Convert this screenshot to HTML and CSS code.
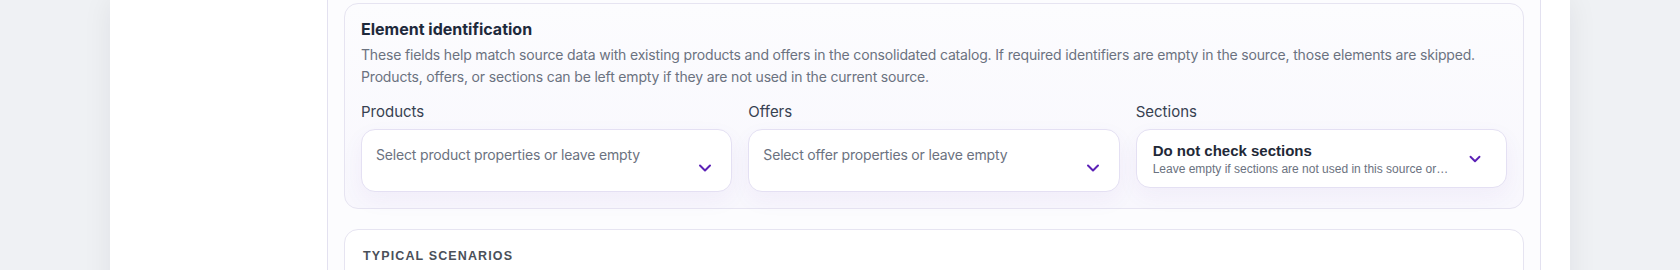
FILE: index.html
```html
<!DOCTYPE html>
<html lang="en">
<head>
<meta charset="utf-8">
<title>Element identification</title>
<link rel="stylesheet" href="styles.css">
</head>
<body>
<div class="page">
  <aside class="sidebar"></aside>
  <main class="column">
    <section class="card card--ident">
      <h2 class="card-title">Element identification</h2>
      <p class="card-desc">These fields help match source data with existing products and offers in the consolidated catalog. If required identifiers are empty in the source, those elements are skipped.<br>Products, offers, or sections can be left empty if they are not used in the current source.</p>
      <div class="fields">
        <div class="field">
          <div class="field-label">Products</div>
          <div class="select select--multi">
            <span class="select-placeholder">Select product properties or leave empty</span>
            <svg class="chevron" viewBox="0 0 24 24" width="20" height="20" aria-hidden="true"><path d="M6 9l6 6 6-6"/></svg>
          </div>
        </div>
        <div class="field">
          <div class="field-label">Offers</div>
          <div class="select select--multi">
            <span class="select-placeholder">Select offer properties or leave empty</span>
            <svg class="chevron" viewBox="0 0 24 24" width="20" height="20" aria-hidden="true"><path d="M6 9l6 6 6-6"/></svg>
          </div>
        </div>
        <div class="field">
          <div class="field-label">Sections</div>
          <div class="select select--single">
            <div class="select-value">
              <div class="select-title">Do not check sections</div>
              <div class="select-hint" title="Leave empty if sections are not used in this source or the source has no section structure">Leave empty if sections are not used in this source or…</div>
            </div>
            <svg class="chevron chevron--sm" viewBox="0 0 24 24" width="18" height="18" aria-hidden="true"><path d="M6 9l6 6 6-6"/></svg>
          </div>
        </div>
      </div>
    </section>
    <section class="card card--scenarios">
      <h3 class="eyebrow">Typical scenarios</h3>
    </section>
  </main>
</div>
</body>
</html>
```
FILE: styles.css
```css
html, body {
  margin: 0;
  height: 100%;
}

body {
  background: #eff1f4;
  font-family: Inter, "Noto Sans", sans-serif;
  overflow: hidden;
}

.page {
  width: 1460px;
  min-height: 270px;
  margin: 0 auto;
  background: #ffffff;
  box-shadow: 0 0 28px rgba(15, 23, 42, 0.07);
  display: grid;
  grid-template-columns: 217px 1214px;
}

.column {
  min-height: 270px;
  box-sizing: border-box;
  padding: 3px 16px 0;
  background: #fcfcfe;
  border-left: 1px solid #e3e1f0;
  border-right: 1px solid #e3e1f0;
}

.card {
  border: 1px solid #e6e4f1;
  border-radius: 14px;
  background: #ffffff;
}

.card--ident {
  padding: 14px 16px 16px;
  background: linear-gradient(180deg, #fcfcfe 0%, #f8f7fd 100%);
}

.card-title {
  margin: 0;
  font-size: 16px;
  line-height: 22px;
  font-weight: 700;
  color: #1e293b;
}

.card-desc {
  margin: 4px 0 0;
  font-size: 14px;
  line-height: 22px;
  letter-spacing: -0.012em;
  color: #6b7280;
}

.fields {
  margin-top: 14px;
  display: grid;
  grid-template-columns: repeat(3, minmax(0, 1fr));
  gap: 16px;
  align-items: start;
}

.field-label {
  font-size: 15px;
  line-height: 20px;
  color: #374151;
  margin-bottom: 7px;
}

.select {
  display: flex;
  align-items: center;
  gap: 16px;
  box-sizing: border-box;
  border: 1px solid #e4e0f3;
  border-radius: 14px;
  background: #ffffff;
  box-shadow: 0 8px 22px rgba(91, 33, 182, 0.05);
}

.select--multi {
  min-height: 63px;
  padding: 15px 16px 0 14px;
  align-items: flex-start;
}

.select--multi .chevron {
  align-self: center;
}

.select-placeholder {
  flex: 1;
  font-size: 14px;
  line-height: 20px;
  letter-spacing: -0.012em;
  color: #6b7280;
}

.select--single {
  padding: 10px 22px 10px 16px;
}

.select-value {
  flex: 1;
  min-width: 0;
}

.select-title {
  font-family: "Liberation Sans", Arial, sans-serif;
  font-weight: 700;
  font-size: 15px;
  line-height: 21px;
  color: #1f2937;
}

.select-hint {
  font-family: "Liberation Sans", Arial, sans-serif;
  font-size: 12px;
  line-height: 16px;
  color: #6b7280;
  white-space: nowrap;
}

.chevron {
  flex: none;
  fill: none;
  stroke: #5b21b6;
  stroke-width: 2.4;
  stroke-linecap: round;
  stroke-linejoin: round;
}

.chevron--sm {
  stroke-width: 2.5;
}

.card--scenarios {
  margin-top: 20px;
  padding: 18px 18px;
  min-height: 60px;
}

.eyebrow {
  margin: 0;
  font-family: "Liberation Sans", Arial, sans-serif;
  font-weight: 700;
  font-size: 12.5px;
  line-height: 16px;
  letter-spacing: 0.09em;
  text-transform: uppercase;
  color: #4a5059;
}
```
